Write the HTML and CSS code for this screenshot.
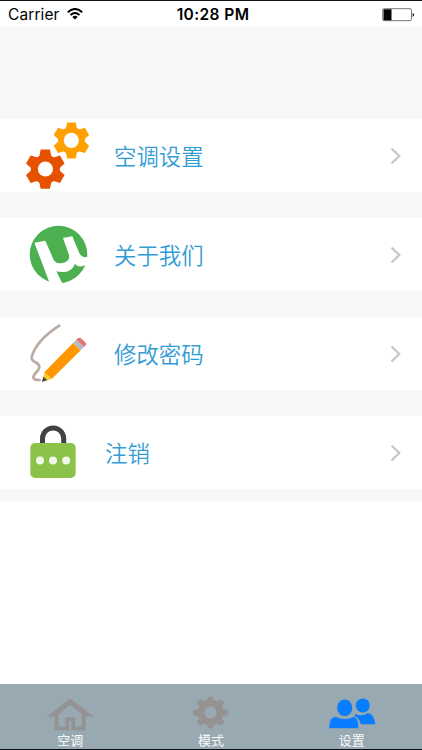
FILE: index.html
```html
<!DOCTYPE html>
<html lang="zh-CN">
<head>
<meta charset="utf-8">
<title>设置</title>
<link rel="stylesheet" href="styles.css">
</head>
<body>
<div class="screen">
  <header class="status">
    <div class="carrier"><span>Carrier</span>
      <svg class="wifi" width="16" height="12" viewBox="0 0 16 12"><g fill="none" stroke="#000" stroke-width="2"><path d="M.8 4.2Q8-2.2 15.2 4.2"/><path d="M3.5 7Q8 3 12.5 7"/></g><path d="M5.4 8.9Q8 6.8 10.6 8.9L8 11.5Z"/></svg>
    </div>
    <time class="clock">10:28 PM</time>
    <svg class="battery" width="33" height="14" viewBox="0 0 33 14"><rect x=".7" y=".7" width="28.8" height="12" rx="1.5" fill="#fff" stroke="#777"/><path d="M1.5 1.3H9.5V12.3H1.5Z"/><path d="M30.7 4.7Q33.5 6.7 30.7 8.9Z"/></svg>
  </header>
  <main class="list">
    <a class="row">
      <svg class="icon" viewBox="20 119 80 73">
        <defs><g id="gear"><circle r="14.8"/><path id="tooth" d="M-4.7-20H4.7L6-14L8-10V10L6 14L4.7 20H-4.7L-6 14L-8 10V-10L-6-14Z"/><use href="#tooth" transform="rotate(60)"/><use href="#tooth" transform="rotate(120)"/></g></defs>
        <use href="#gear" fill="#ffa000" transform="translate(71.4 140.4) scale(.9)"/><circle cx="71.3" cy="140.4" r="7.6" fill="#fff"/>
        <use href="#gear" fill="#e65100" transform="translate(45.3 169.2) scale(.98)"/><circle cx="45.4" cy="169" r="7.6" fill="#fff"/>
      </svg>
      <span class="label">空调设置</span>
      <svg class="chevron" viewBox="0 0 12 18"><path d="M1.5 1.5L9.3 9L1.5 16.5"/></svg>
    </a>
    <a class="row">
      <svg class="icon" viewBox="20 218 80 73">
        <circle cx="58.5" cy="254.5" r="28.8" fill="#4caf50"/>
        <g transform="translate(26 222) scale(.33333)"><path fill="#fff" d="M25 62L58 56L77 100C83 117 90 125 103 124C126 122 133 111 128 96L111 48L139 43L156 84C162 101 170 109 186 104L180 128C165 137 154 133 146 125C142 146 117 155 91 148L109 184L88 188L70 181Z"/></g>
      </svg>
      <span class="label">关于我们</span>
      <svg class="chevron" viewBox="0 0 12 18"><path d="M1.5 1.5L9.3 9L1.5 16.5"/></svg>
    </a>
    <a class="row">
      <svg class="icon" viewBox="20 317 80 73">
        <g transform="translate(10 310) scale(.33333)">
          <path d="M148 47C115 68 77 101 65 140C61 158 89 155 88 171C87 184 70 190 70 203Q72 211 89 210" fill="none" stroke="#bcaaa4" stroke-width="8" stroke-linecap="round"/>
          <path d="M103 187L189 99L212 121L125 207Z" fill="#ff9800"/>
          <path d="M189 99L199 89L222 111L212 121Z" fill="#b0bec5"/>
          <path d="M199 89L203 85Q209 81 215 87L226 97Q231 102 226 107L222 111Z" fill="#e57373"/>
          <path d="M103 187L97 215L125 207Z" fill="#ffc72e"/><path d="M100 200L96 215L112 211Z" fill="#37474f"/>
        </g>
      </svg>
      <span class="label">修改密码</span>
      <svg class="chevron" viewBox="0 0 12 18"><path d="M1.5 1.5L9.3 9L1.5 16.5"/></svg>
    </a>
    <a class="row row-logout">
      <svg class="icon" viewBox="20 416 80 73">
        <path d="M42.5 445V438.5A10.6 10.6 0 0 1 63.7 438.5V445" fill="none" stroke="#424242" stroke-width="5"/>
        <rect x="30.3" y="443" width="45.4" height="35" rx="4.7" fill="#8bc34a"/>
        <g fill="#f1f8e9"><circle cx="40" cy="460.5" r="4"/><circle cx="53" cy="460.5" r="4"/><circle cx="66.2" cy="460.5" r="4"/></g>
      </svg>
      <span class="label">注销</span>
      <svg class="chevron" viewBox="0 0 12 18"><path d="M1.5 1.5L9.3 9L1.5 16.5"/></svg>
    </a>
  </main>
  <nav class="tabs">
    <a class="tab">
      <svg class="tab-icon" viewBox="45 694 50 38"><path d="M47 716.5L70.2 698.4L94 716.5H85L70.2 705L56 716.5Z" fill="#949293"/><path d="M56.5 712V728.3H67.3V719H73.3V728.3H83.7V712" fill="none" stroke="#949293" stroke-width="3.7"/></svg>
      <span>空调</span>
    </a>
    <a class="tab">
      <svg class="tab-icon" viewBox="-24.5 -18.5 50 38"><g fill="none" stroke="#949293"><circle r="9.5" stroke-width="7"/><g stroke-width="6.4" stroke-linecap="round"><path d="M0-11V-12.7M0 11V12.7M-11 0H-14.5M11 0H14.5M-8.5-8.2L-10-9.5M8.5-8.2L10-9.5M-8.5 8.2L-10 9.5M8.5 8.2L10 9.5"/></g></g></svg>
      <span>模式</span>
    </a>
    <a class="tab active">
      <svg class="tab-icon" viewBox="327 694 50 38"><g fill="#087dff"><ellipse cx="362.8" cy="705.5" rx="7" ry="7.1"/><path d="M355 714Q362 717 368 713Q374 714 375.3 724.3H361Q359 718 354.5 716Z"/><ellipse cx="344.7" cy="707.8" rx="8" ry="8.8" stroke="#98a9b2" stroke-width="1"/><path d="M328.8 728.5Q329 717 335.5 716.6Q345 721 354 716.6Q359 718 358.5 728.5Z" stroke="#98a9b2" stroke-width=".6"/></g></svg>
      <span>设置</span>
    </a>
  </nav>
</div>
</body>
</html>
```
FILE: styles.css
```css
* { box-sizing: border-box; }
body { margin: 0; font-family: Inter, "Noto Sans CJK SC", sans-serif; background: #fff; }
.screen { height: 750px; display: flex; flex-direction: column; background: #fff; border-top: 1px solid #111; border-bottom: 1px solid #061018; overflow: hidden; }
.status { flex: 0 0 26px; display: grid; grid-template-columns: 1fr auto 1fr; align-items: center; padding: 1px 8px 0; font-size: 15.5px; line-height: 24px; color: #000; }
.carrier { display: flex; align-items: center; gap: 7px; letter-spacing: .1px; }
.wifi { margin-top: -2px; }
.clock { margin-left: 4px; font-weight: 600; font-size: 15.5px; letter-spacing: .4px; }
.battery { justify-self: end; margin-right: -1px; }
.list { flex: 0 0 474px; display: flex; flex-direction: column; gap: 26px; padding-top: 92px; background: #f7f7f7; }
.row { flex: 0 0 73px; display: flex; align-items: center; padding: 0 20px; background: #fff; }
.icon { width: 80px; height: 73px; flex: none; }
.label { flex: 1; margin: -2px 0 0 14px; font-family: "Noto Sans CJK SC", sans-serif; font-size: 22.4px; font-weight: 350; line-height: 32px; color: #329cd5; }
.row-logout .label { margin-left: 5px; }
.chevron { width: 12px; height: 18px; fill: none; stroke: #c5c5ca; stroke-width: 2.2; }
.tabs { margin-top: auto; flex: 0 0 65px; display: grid; grid-template-columns: repeat(3, 1fr); background: #98a9b2; }
.tab { display: flex; flex-direction: column; align-items: center; padding-top: 10px; color: #f7fafb; font-family: "Noto Sans CJK SC", sans-serif; font-size: 13px; line-height: 16px; }
.tab-icon { width: 50px; height: 38px; flex: none; }
```
